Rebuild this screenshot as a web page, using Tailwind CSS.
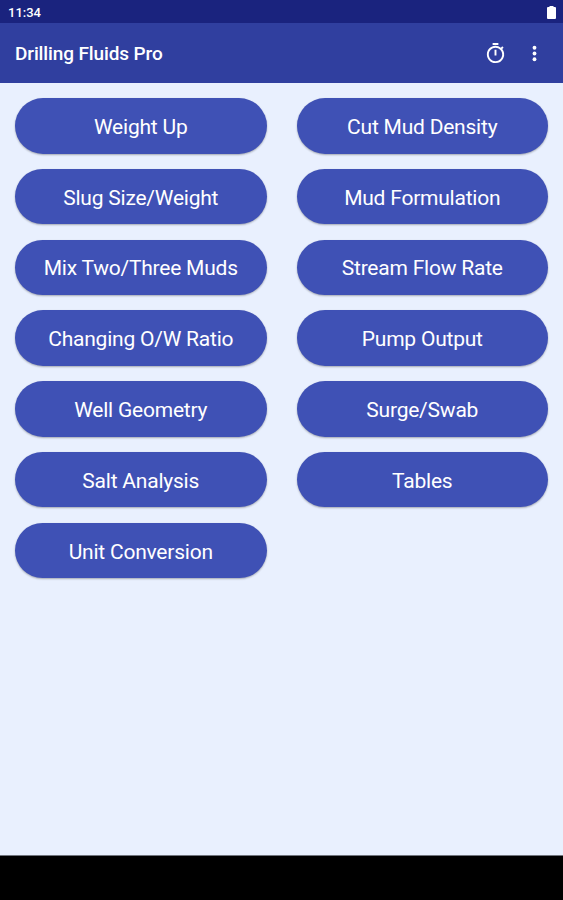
<!DOCTYPE html>
<html lang="en">
<head>
  <meta charset="UTF-8" />
  <meta name="viewport" content="width=device-width, initial-scale=1" />
  <title>Drilling Fluids Pro</title>
  <script src="https://cdn.jsdelivr.net/npm/@tailwindcss/browser@4"></script>
</head>
<body class="h-screen flex flex-col overflow-hidden bg-[#e9f0fe] font-['Roboto',sans-serif] text-white select-none">

  <!-- Status bar -->
  <div class="h-[23px] shrink-0 bg-[#1a237e] flex items-center justify-between pl-2 pr-[7px]">
    <span class="text-[13px] font-medium leading-none pt-0.5">11:34</span>
    <svg class="w-[9px] h-[13px] mt-0.5" viewBox="0 0 9 13" fill="currentColor">
      <path d="M2.500 0h4v1H8a1 1 0 0 1 1 1v10a1 1 0 0 1-1 1H1a1 1 0 0 1-1-1V2a1 1 0 0 1 1-1h1.500z" />
    </svg>
  </div>

  <!-- App bar -->
  <header class="h-[60px] shrink-0 bg-[#303f9f] flex items-center pl-[15px] pr-[17px]">
    <h1 class="flex-1 text-[19px] font-medium leading-none tracking-[-0.12px]">Drilling Fluids Pro</h1>
    <button class="mr-4">
      <svg class="w-[23px] h-[23px]" viewBox="0 0 24 24" fill="currentColor">
        <path d="M15 1H9v2h6V1zm-4 13h2V8h-2v6zm8.030-6.610 1.420-1.420c-.430-.510-.900-.990-1.410-1.410l-1.420 1.420A8.962 8.962 0 0 0 12 4c-4.970 0-9 4.030-9 9s4.020 9 9 9a8.994 8.994 0 0 0 7.030-14.610zM12 20c-3.870 0-7-3.130-7-7s3.130-7 7-7 7 3.130 7 7-3.130 7-7 7z" />
      </svg>
    </button>
    <button>
      <svg class="w-[23px] h-[23px]" viewBox="0 0 24 24" fill="currentColor">
        <circle cx="12" cy="6" r="2" />
        <circle cx="12" cy="12" r="2" />
        <circle cx="12" cy="18" r="2" />
      </svg>
    </button>
  </header>

  <main id="menu" class="flex-1 grid grid-cols-2 content-start gap-x-[30px] gap-y-[15.300px] px-[15px] pt-[15px]"></main>

  <!-- Navigation bar -->
  <div class="h-[45px] shrink-0 bg-black border-t border-[#70747c]"></div>

  <script>
    const items = [
      'Weight Up', 'Cut Mud Density',
      'Slug Size/Weight', 'Mud Formulation',
      'Mix Two/Three Muds', 'Stream Flow Rate',
      'Changing O/W Ratio', 'Pump Output',
      'Well Geometry', 'Surge/Swab',
      'Salt Analysis', 'Tables',
      'Unit Conversion',
    ];

    const menu = document.getElementById('menu');
    items.forEach(label => {
      const btn = document.createElement('button');
      btn.className = 'h-[55.500px] rounded-full bg-[#3f51b5] text-[21px] leading-none tracking-[-0.22px] pt-[3px] shadow-[0_1px_2px_rgba(0,0,0,0.3)]';
      btn.textContent = label;
      menu.appendChild(btn);
    });
  </script>
</body>
</html>
